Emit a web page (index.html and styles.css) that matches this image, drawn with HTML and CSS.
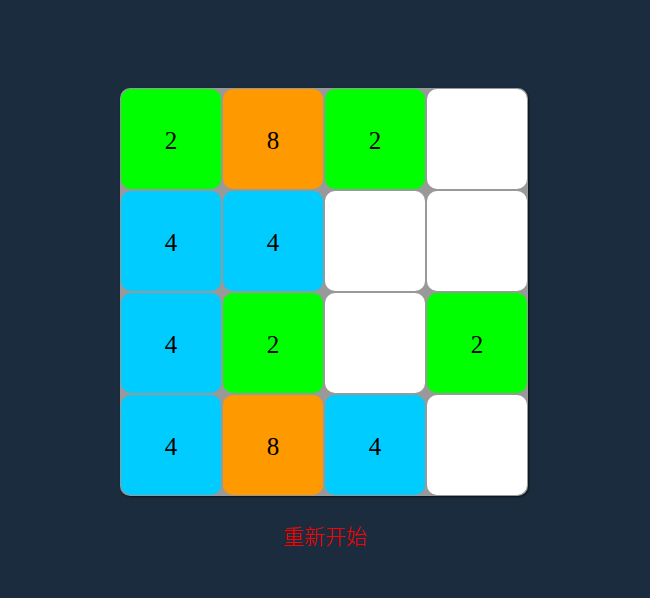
FILE: index.html
```html
<!DOCTYPE html>
<html lang="zh">
<head>
    <meta charset="UTF-8">
    <meta name="viewport" content="width=device-width, initial-scale=1.0">
    <title>2048</title>
    <link rel="stylesheet" href="styles.css">
</head>
<body>
    <div class="board">
        <div class="tile t2">2</div>
        <div class="tile t8">8</div>
        <div class="tile t2">2</div>
        <div class="tile"></div>

        <div class="tile t4">4</div>
        <div class="tile t4">4</div>
        <div class="tile"></div>
        <div class="tile"></div>

        <div class="tile t4">4</div>
        <div class="tile t2">2</div>
        <div class="tile"></div>
        <div class="tile t2">2</div>

        <div class="tile t4">4</div>
        <div class="tile t8">8</div>
        <div class="tile t4">4</div>
        <div class="tile"></div>
    </div>

    <div class="restart">重新开始</div>
</body>
</html>
```

FILE: styles.css
```css
body {
    margin: 0;
    padding: 88px 2px 0 0;
    background-color: #1b2c3e;
    display: flex;
    flex-direction: column;
    align-items: center;
}
.board {
    display: grid;
    grid-template-columns: repeat(4, 100px);
    grid-auto-rows: 100px;
    gap: 2px;
    padding: 1px;
    background-color: #999;
    border-radius: 10px;
    box-shadow: 1px 1px 2px rgba(0,0,0,0.6);
}
.tile {
    background-color: #fff;
    border-radius: 10px;
    display: flex;
    align-items: center;
    justify-content: center;
    padding-top: 3px;
    box-sizing: border-box;
    font-family: "Liberation Serif", serif;
    font-size: 25px;
    color: #000;
}
.t2 { background-color: #00ff00; }
.t4 { background-color: #00ccff; }
.t8 { background-color: #ff9900; }
.restart {
    margin: 24px 0 0 2px;
    font-family: "Noto Sans CJK SC", sans-serif;
    font-size: 21px;
    font-weight: 300;
    color: #ff0000;
    cursor: pointer;
}
```
